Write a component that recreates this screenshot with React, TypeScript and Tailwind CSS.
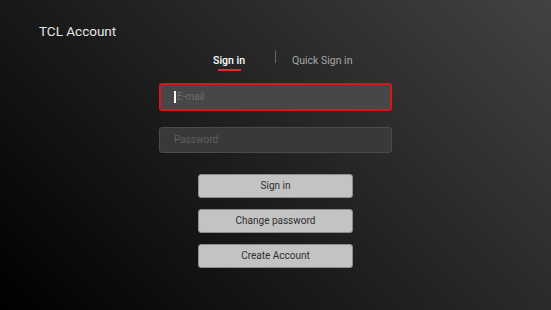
import React from "react";

export default function App() {
  return (
    <div
      className="relative flex h-[310px] w-full flex-col overflow-hidden bg-[linear-gradient(45deg,#000000_0%,#424242_100%)]"
      style={{ fontFamily: "Roboto, 'Liberation Sans', sans-serif" }}
    >
      <div className="pl-[39px] pt-[23px] text-[13.5px] leading-[16px] text-[#e6e6e6]">TCL Account</div>

      {/* Tabs */}
      <div className="mt-[11px] flex w-full items-start">
        <div className="flex flex-1 justify-end">
          <div className="mr-[30px] flex flex-col items-center pt-[4px]">
            <span className="text-[10.5px] font-medium leading-[14px] text-white">Sign in</span>
            <div className="mt-[1px] h-[2px] w-[23px] bg-[#d9312f]" />
          </div>
        </div>
        <div className="h-[13px] w-px bg-[#666666]" />
        <div className="flex flex-1 justify-start pt-[4px]">
          <span className="ml-[16px] text-[10.5px] leading-[14px] text-[#a8a8a8]">Quick Sign in</span>
        </div>
      </div>

      {/* Inputs */}
      <div className="mt-[12px] flex flex-col items-center">
        <div className="flex h-[28px] w-[233px] items-center rounded-[3px] border-2 border-[#d8151b] bg-[#474747] pl-[13px]">
          <div className="h-[12px] w-[2px] bg-white" />
          <span className="ml-[1px] text-[10px] leading-[12px] text-[#6e6e6e]">E-mail</span>
        </div>
        <div className="mt-[16px] flex h-[26px] w-[233px] items-center rounded-[3px] border border-[#4b4b4b] bg-[#393939] pl-[14px]">
          <span className="text-[10px] leading-[12px] text-[#5f5f5f]">Password</span>
        </div>
      </div>

      {/* Buttons */}
      <div className="mt-[21px] flex flex-col items-center gap-[11px]">
        {["Sign in", "Change password", "Create Account"].map((t) => (
          <button
            key={t}
            className="flex h-[24px] w-[155px] items-center justify-center rounded-[3px] border border-[#8c8c8c] bg-[#c3c3c3] text-[10px] leading-[14px] text-[#2e2e2e]"
          >
            {t}
          </button>
        ))}
      </div>
    </div>
  );
}
